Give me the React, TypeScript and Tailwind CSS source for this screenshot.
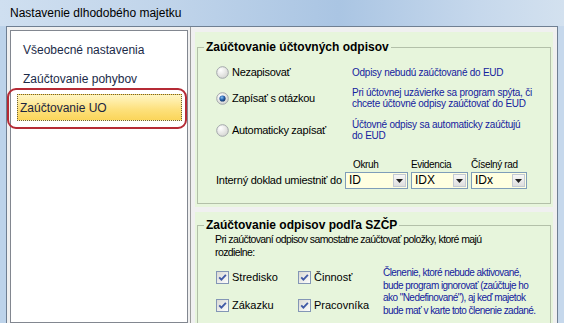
import React from "react";

const Radio = ({ checked }: { checked?: boolean }) => (
  <svg width="13" height="13" viewBox="0 0 13 13" className="shrink-0">
    <defs>
      <radialGradient id="rgBg" cx="0.35" cy="0.3" r="0.85">
        <stop offset="0" stopColor="#ffffff" />
        <stop offset="1" stopColor="#cfd0cc" />
      </radialGradient>
      <radialGradient id="rgDot" cx="0.4" cy="0.35" r="0.7">
        <stop offset="0" stopColor="#8cc6f5" />
        <stop offset="0.5" stopColor="#2a64ae" />
        <stop offset="1" stopColor="#0c2d5e" />
      </radialGradient>
    </defs>
    <circle cx="6.5" cy="6.5" r="5.8" fill="url(#rgBg)" stroke="#a2a6aa" strokeWidth="1" />
    {checked && <circle cx="6.5" cy="6.5" r="3.1" fill="url(#rgDot)" />}
  </svg>
);

const Check = () => (
  <svg width="13" height="13" viewBox="0 0 13 13" className="shrink-0">
    <defs>
      <linearGradient id="cbBg" x1="0" y1="0" x2="1" y2="1">
        <stop offset="0" stopColor="#d8d8d2" />
        <stop offset="1" stopColor="#ffffff" />
      </linearGradient>
    </defs>
    <rect x="0.5" y="0.5" width="12" height="12" fill="url(#cbBg)" stroke="#8396b6" />
    <path d="M3.2 6.3 L5.4 8.7 L9.9 3.8" fill="none" stroke="#4059a6" strokeWidth="1.8" />
  </svg>
);

const ComboBtn = () => (
  <div className="ml-auto my-px mr-px w-[13px] border border-[#c3cad3] bg-[linear-gradient(#f7f7f7,#dedede)] flex items-center justify-center">
    <svg width="7" height="4" viewBox="0 0 7 4">
      <path d="M0 0H7L3.5 4Z" fill="#202020" />
    </svg>
  </div>
);

export default function App() {
  return (
    <div className="relative w-[564px] h-[323px] overflow-hidden flex flex-col bg-[linear-gradient(90deg,#cfdff0_0%,#c0d4ea_30%,#aac5e3_60%,#c6d8ec_85%,#d3e1ef_100%)] font-['Liberation_Sans',sans-serif] whitespace-nowrap">
      {/* Title bar */}
      <div className="h-[26px] shrink-0 flex items-center pl-[10px] text-[12px] text-black">
        Nastavenie dlhodobého majetku
      </div>

      {/* Body */}
      <div className="flex flex-1 min-h-0">
        <div className="w-[6px] bg-[#bdd3ea]" />
        <div className="flex flex-1 min-w-0 border-l border-t border-r border-[#6f7f92] bg-[#f0f0f0]">
          {/* Left list */}
          <div className="pl-[3px] pt-[3px] flex">
            <div className="w-[178px] border border-[#828790] bg-white pt-[5px] flex flex-col text-[12px] text-[#1b2a48]">
              <div className="ml-[6px] mr-[5px] h-[27px] mb-[2px] pl-[6px] flex items-center">Všeobecné nastavenia</div>
              <div className="ml-[6px] mr-[5px] h-[27px] mb-[2px] pl-[6px] flex items-center">Zaúčtovanie pohybov</div>
              <div className="ml-[6px] mr-[5px] h-[27px] mb-[2px] pl-[2px] flex items-center border border-dotted border-[#6d6136] bg-[linear-gradient(#fff6c4,#fde07a_60%,#fbd55a)] text-[#1a2440]">
                Zaúčtovanie UO
              </div>
            </div>
          </div>
          <div className="ml-[2px] w-px bg-[#9b9b9b]" />

          {/* Right content */}
          <div className="flex-1 min-w-0 flex flex-col pt-[5px] pl-[4px] pr-[4px] gap-[5px]">
            {/* Panel 1 */}
            <div className="h-[175px] shrink-0 bg-[#e7f5dc] pt-[8px] px-[2px]">
              <fieldset className="h-[164px] border border-[#b3c0a9]">
                <legend className="ml-[6px] px-[2px] text-[12px] leading-[14px] font-bold text-black">
                  Zaúčtovanie účtovných odpisov
                </legend>
                <div className="pl-[18px] flex flex-col">
                  <div className="mt-[6px] h-[24px] flex items-center">
                    <div className="w-[136px] flex items-center gap-[3px] text-[11px] tracking-[-0.3px] text-black">
                      <Radio />
                      <span>Nezapisovať</span>
                    </div>
                    <div className="text-[10px] leading-[11px] tracking-[-0.25px] text-[#14229e]">Odpisy nebudú zaúčtované do EUD</div>
                  </div>
                  <div className="mt-[2px] h-[24px] flex items-center">
                    <div className="w-[136px] flex items-center gap-[3px] text-[11px] tracking-[-0.3px] text-black">
                      <Radio checked />
                      <span>Zapísať s otázkou</span>
                    </div>
                    <div className="text-[10px] leading-[11px] tracking-[-0.25px] text-[#14229e]">
                      Pri účtovnej uzávierke sa program spýta, či
                      <br />
                      chcete účtovné odpisy zaúčtovať do EUD
                    </div>
                  </div>
                  <div className="mt-[8px] h-[24px] flex items-center">
                    <div className="w-[136px] flex items-center gap-[3px] text-[11px] tracking-[-0.3px] text-black">
                      <Radio />
                      <span>Automaticky zapísať</span>
                    </div>
                    <div className="text-[10px] leading-[11px] tracking-[-0.25px] text-[#14229e]">
                      Účtovné odpisy sa automaticky zaúčtujú
                      <br />
                      do EUD
                    </div>
                  </div>

                  <div className="mt-[16px] flex items-end">
                    <div className="w-[129px] h-[17px] flex items-center text-[11px] tracking-[-0.25px] text-black">Interný doklad umiestniť do</div>
                    <div className="flex flex-col">
                      <div className="h-[14px] leading-[14px] pl-[8px] text-[10px] tracking-[-0.35px] text-black">Okruh</div>
                      <div className="w-[63px] h-[17px] flex border border-[#7f9db9] bg-[#ffffe1]">
                        <span className="pl-[3px] text-[12px] leading-[15px] text-black">ID</span>
                        <ComboBtn />
                      </div>
                    </div>
                    <div className="ml-[3px] flex flex-col">
                      <div className="h-[14px] leading-[14px] text-[10px] tracking-[-0.35px] text-black">Evidencia</div>
                      <div className="w-[57px] h-[17px] flex border border-[#7f9db9] bg-[#ffffe1]">
                        <span className="pl-[3px] text-[12px] leading-[15px] text-black">IDX</span>
                        <ComboBtn />
                      </div>
                    </div>
                    <div className="ml-[3px] flex flex-col">
                      <div className="h-[14px] leading-[14px] text-[10px] tracking-[-0.35px] text-black">Číselný rad</div>
                      <div className="w-[56px] h-[17px] flex border border-[#7f9db9] bg-[#ffffe1]">
                        <span className="pl-[3px] text-[12px] leading-[15px] text-black">IDx</span>
                        <ComboBtn />
                      </div>
                    </div>
                  </div>
                </div>
              </fieldset>
            </div>

            {/* Panel 2 */}
            <div className="flex-1 bg-[#e7f5dc] pt-[6px] px-[2px]">
              <fieldset className="h-[200px] border border-[#b3c0a9]">
                <legend className="ml-[6px] px-[2px] text-[12px] leading-[14px] font-bold text-black">
                  Zaúčtovanie odpisov podľa SZČP
                </legend>
                <div className="pl-[17px] mt-[1px] text-[10.5px] leading-[13px] tracking-[-0.6px] text-black">
                  Pri zaúčtovaní odpisov samostatne zaúčtovať položky, ktoré majú
                  <br />
                  rozdielne:
                </div>
                <div className="mt-[8px] pl-[18px] flex">
                  <div className="grid grid-cols-[82px_85px] gap-y-[7px] text-[11px] text-black">
                    <div className="h-[20px] flex items-center gap-[3px]"><Check /><span>Stredisko</span></div>
                    <div className="h-[20px] flex items-center gap-[3px]"><Check /><span>Činnosť</span></div>
                    <div className="h-[20px] flex items-center gap-[3px]"><Check /><span>Zákazku</span></div>
                    <div className="h-[20px] flex items-center gap-[3px]"><Check /><span>Pracovníka</span></div>
                  </div>
                  <div className="text-[10px] leading-[12.6px] tracking-[-0.55px] text-[#14229e]">
                    Členenie, ktoré nebude aktivované,
                    <br />
                    bude program ignorovať (zaúčtuje ho
                    <br />
                    ako "Nedefinované"), aj keď majetok
                    <br />
                    bude mať v karte toto členenie zadané.
                  </div>
                </div>
              </fieldset>
            </div>
          </div>
        </div>
        <div className="w-[6px] bg-[#c6d8ec]" />
      </div>

      {/* Red annotation */}
      <div className="absolute left-[7px] top-[88px] w-[180px] h-[41px] border-2 border-[#b52a35] rounded-[9px] pointer-events-none" />
    </div>
  );
}
